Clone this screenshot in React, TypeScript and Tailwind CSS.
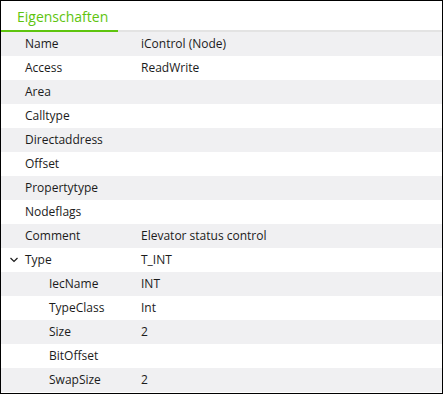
import React from 'react';

type Row = { label: string; value?: string; level?: number; expander?: boolean };

const rows: Row[] = [
  { label: 'Name', value: 'iControl (Node)' },
  { label: 'Access', value: 'ReadWrite' },
  { label: 'Area' },
  { label: 'Calltype' },
  { label: 'Directaddress' },
  { label: 'Offset' },
  { label: 'Propertytype' },
  { label: 'Nodeflags' },
  { label: 'Comment', value: 'Elevator status control' },
  { label: 'Type', value: 'T_INT', expander: true },
  { label: 'IecName', value: 'INT', level: 1 },
  { label: 'TypeClass', value: 'Int', level: 1 },
  { label: 'Size', value: '2', level: 1 },
  { label: 'BitOffset', level: 1 },
  { label: 'SwapSize', value: '2', level: 1 },
];

const App: React.FC = () => {
  return (
    <div className="w-[443px] h-[394px] border border-black bg-white overflow-hidden text-[12px] text-[#1b1b1b] font-['Open_Sans','Noto_Sans',sans-serif]">
      {/* tab header */}
      <div className="flex h-[31px] items-end border-b-2 border-[#e3e3e3]">
        <div className="relative -mb-[2px] w-[117px] h-[31px] border-b-2 border-[#5ec40e] pl-[16px] pt-[5px] text-[14px] text-[#5ec40e]">
          Eigenschaften
        </div>
      </div>

      <div>
        {rows.map((r, i) => (
          <div
            key={r.label}
            className={`flex items-center h-[24px] ${i % 2 === 0 ? 'bg-[#f0f0f2]' : 'bg-white'}`}
          >
            <div className="w-[140px] flex items-center shrink-0">
              <div className="w-[24px] flex justify-center">
                {r.expander && (
                  <svg width="10" height="10" viewBox="0 0 10 10" className="ml-[2px]">
                    <path d="M1.5 3 L5 6.5 L8.5 3" fill="none" stroke="#1b1b1b" strokeWidth="1.2" />
                  </svg>
                )}
              </div>
              <span className={r.level ? 'pl-[24px]' : ''}>{r.label}</span>
            </div>
            <span>{r.value}</span>
          </div>
        ))}
      </div>
    </div>
  );
};

export default App;
